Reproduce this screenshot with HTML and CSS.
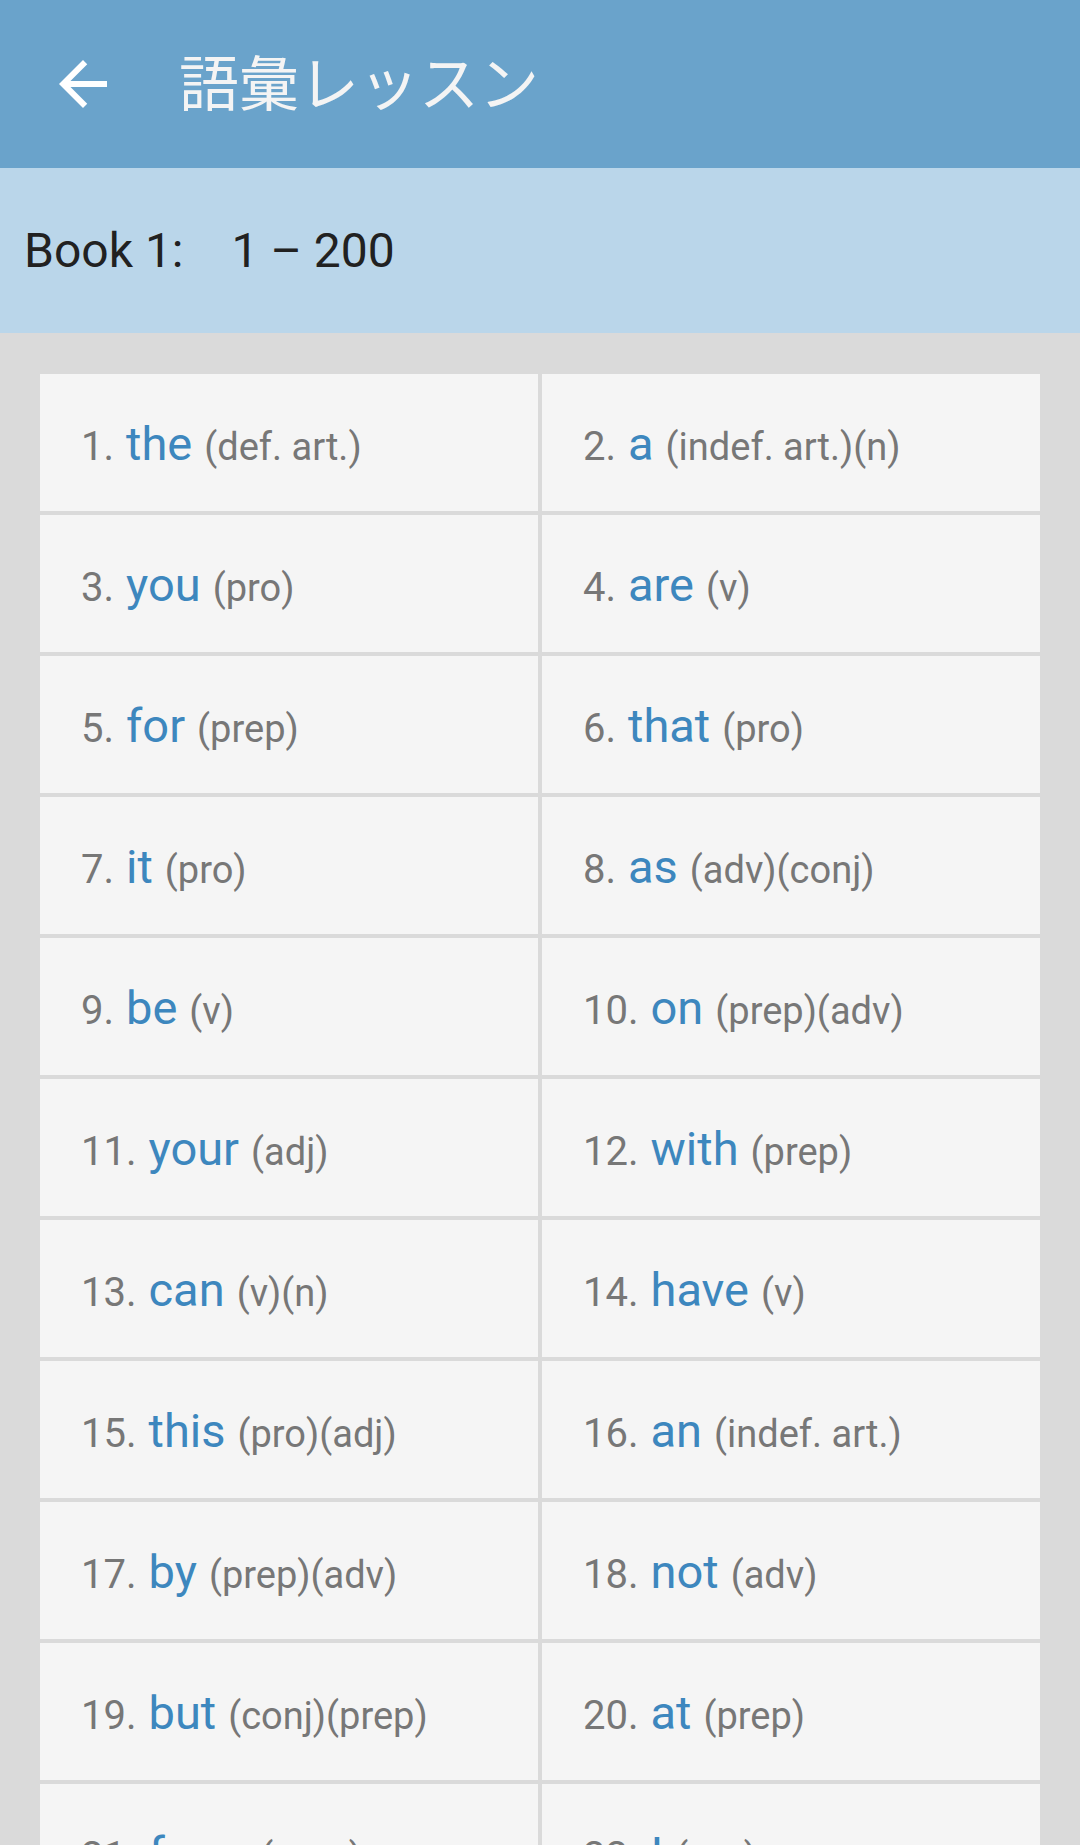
FILE: index.html
```html
<!DOCTYPE html>
<html lang="ja">
<head>
<meta charset="utf-8">
<title>語彙レッスン</title>
<link rel="stylesheet" href="styles.css">
</head>
<body>
<header class="toolbar">
  <svg class="back" viewBox="0 0 24 24" width="72" height="72" aria-hidden="true"><path d="M20 11H7.83l5.59-5.59L12 4l-8 8 8 8 1.41-1.41L7.83 13H20v-2z" fill="#ffffff"/></svg>
  <h1 class="title">語彙レッスン</h1>
</header>
<section class="book">
  <span>Book 1:</span><span>1 – 200</span>
</section>
<main class="grid">
  <div class="cell"><span class="num">1.</span><span class="word">the</span><span class="pos">(def. art.)</span></div>
  <div class="cell"><span class="num">2.</span><span class="word">a</span><span class="pos">(indef. art.)(n)</span></div>
  <div class="cell"><span class="num">3.</span><span class="word">you</span><span class="pos">(pro)</span></div>
  <div class="cell"><span class="num">4.</span><span class="word">are</span><span class="pos">(v)</span></div>
  <div class="cell"><span class="num">5.</span><span class="word">for</span><span class="pos">(prep)</span></div>
  <div class="cell"><span class="num">6.</span><span class="word">that</span><span class="pos">(pro)</span></div>
  <div class="cell"><span class="num">7.</span><span class="word">it</span><span class="pos">(pro)</span></div>
  <div class="cell"><span class="num">8.</span><span class="word">as</span><span class="pos">(adv)(conj)</span></div>
  <div class="cell"><span class="num">9.</span><span class="word">be</span><span class="pos">(v)</span></div>
  <div class="cell"><span class="num">10.</span><span class="word">on</span><span class="pos">(prep)(adv)</span></div>
  <div class="cell"><span class="num">11.</span><span class="word">your</span><span class="pos">(adj)</span></div>
  <div class="cell"><span class="num">12.</span><span class="word">with</span><span class="pos">(prep)</span></div>
  <div class="cell"><span class="num">13.</span><span class="word">can</span><span class="pos">(v)(n)</span></div>
  <div class="cell"><span class="num">14.</span><span class="word">have</span><span class="pos">(v)</span></div>
  <div class="cell"><span class="num">15.</span><span class="word">this</span><span class="pos">(pro)(adj)</span></div>
  <div class="cell"><span class="num">16.</span><span class="word">an</span><span class="pos">(indef. art.)</span></div>
  <div class="cell"><span class="num">17.</span><span class="word">by</span><span class="pos">(prep)(adv)</span></div>
  <div class="cell"><span class="num">18.</span><span class="word">not</span><span class="pos">(adv)</span></div>
  <div class="cell"><span class="num">19.</span><span class="word">but</span><span class="pos">(conj)(prep)</span></div>
  <div class="cell"><span class="num">20.</span><span class="word">at</span><span class="pos">(prep)</span></div>
  <div class="cell"><span class="num">21.</span><span class="word">from</span><span class="pos">(prep)</span></div>
  <div class="cell"><span class="num">22.</span><span class="word">I</span><span class="pos">(pro)</span></div>
</main>
</body>
</html>
```
FILE: styles.css
```css
html, body {
  margin: 0;
  padding: 0;
}
body {
  background: #dadada;
  font-family: Roboto, "Noto Sans", "Noto Sans CJK JP", sans-serif;
  height: 1845px;
  overflow: hidden;
}
.toolbar {
  height: 168px;
  background: #6aa3cb;
  display: flex;
  align-items: center;
  padding-left: 47px;
  box-sizing: border-box;
}
.back {
  display: block;
  flex: none;
}
.title {
  margin: 0 0 0 60px;
  padding-bottom: 8px;
  font-family: "Noto Sans CJK JP", sans-serif;
  font-weight: 400;
  font-size: 60px;
  line-height: 1;
  color: #f4f4f4;
}
.book {
  height: 165px;
  background: #bad6ea;
  display: flex;
  align-items: center;
  gap: 48px;
  padding-left: 24px;
  font-size: 48px;
  color: #212121;
}
.grid {
  display: grid;
  grid-template-columns: 1fr 1fr;
  gap: 4px;
  padding: 41px 40px 0;
}
.cell {
  background: #f5f5f5;
  height: 137px;
  box-sizing: border-box;
  display: flex;
  align-items: baseline;
  padding: 3px 0 0 41px;
  line-height: 134px;
  white-space: nowrap;
}
.num {
  font-size: 40px;
  color: #777777;
}
.word {
  font-size: 47px;
  color: #3d87be;
  margin: 0 12px 0 12px;
}
.pos {
  font-size: 38px;
  color: #777777;
}
```
